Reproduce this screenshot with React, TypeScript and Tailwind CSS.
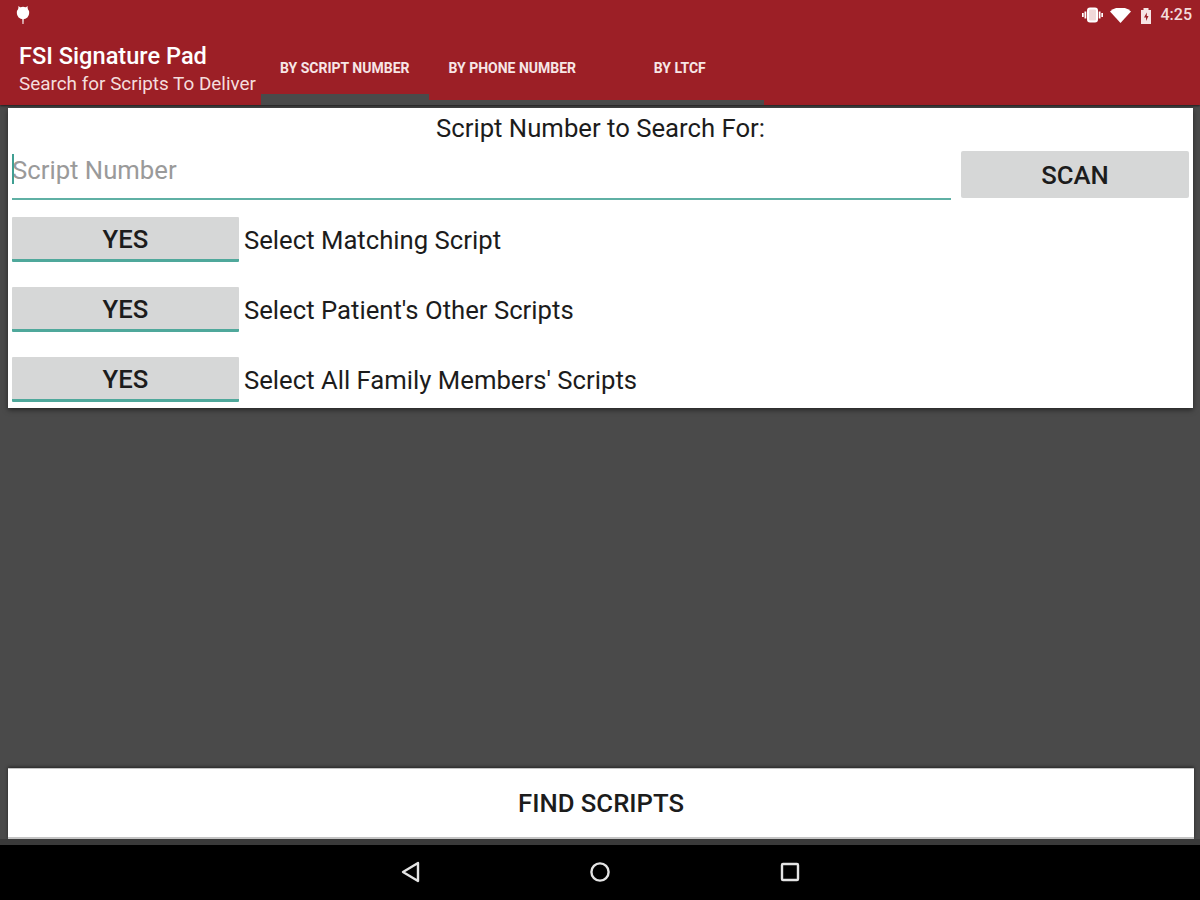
import React from 'react';

const tabs = ['BY SCRIPT NUMBER', 'BY PHONE NUMBER', 'BY LTCF'];
const options = ['Select Matching Script', "Select Patient's Other Scripts", "Select All Family Members' Scripts"];

function StatusBar() {
  return (
    <div className="h-[30px] flex items-center justify-between pl-[15px] pr-[8px]">
      <svg width="16" height="22" viewBox="0 0 16 22" fill="white">
        <circle cx="8" cy="9" r="6.2" />
        <path d="M3.4 2 L6 4 H10 L12.6 2 L12.6 6 H3.4 Z" />
        <path d="M7.3 14 H8.7 L8.5 20 H7.5 Z" />
      </svg>
      <div className="flex items-center">
        <svg width="21" height="16" viewBox="0 0 21 16" fill="none" className="mr-[7px]">
          <rect x="6" y="1.5" width="9" height="13" rx="2" fill="#f1d9d9" stroke="white" strokeWidth="2" />
          <path d="M3.4 4.5v7M0.8 6v4M17.6 4.5v7M20.2 6v4" stroke="white" strokeWidth="1.8" />
        </svg>
        <svg width="21" height="15" viewBox="0 0 21 15" fill="white" className="mr-[9px]">
          <path d="M10.5 15 L0 3.5 A15.5 15.5 0 0 1 21 3.5 Z" />
        </svg>
        <svg width="12" height="17" viewBox="0 0 12 17" className="mr-[9px]">
          <path d="M1 3h2.5V1h5v2H11v14H1Z" fill="#f6e4e4" />
          <path d="M6.8 5.5 4 10.5h2V14L8.5 9H6.8Z" fill="#9c1f26" />
        </svg>
        <span className="text-[16px] font-medium text-[#f3dcdc] leading-none">4:25</span>
      </div>
    </div>
  );
}

function NavBar() {
  return (
    <div className="h-[55px] bg-black flex items-center justify-center gap-[169px] pb-[1px]">
      <svg width="20" height="24" viewBox="0 0 20 24" fill="none">
        <path d="M18 3 L3 12 L18 21 Z" stroke="#e4e4e4" strokeWidth="2.4" strokeLinejoin="round" />
      </svg>
      <svg width="22" height="22" viewBox="0 0 22 22" fill="none">
        <circle cx="11" cy="11" r="8.6" stroke="#e4e4e4" strokeWidth="2.4" />
      </svg>
      <svg width="20" height="20" viewBox="0 0 20 20" fill="none">
        <rect x="2" y="2" width="16" height="16" rx="1" stroke="#e4e4e4" strokeWidth="2.4" />
      </svg>
    </div>
  );
}

export default function App() {
  return (
    <div className="w-[1200px] h-[900px] flex flex-col overflow-hidden bg-[#4a4a4a] font-['Roboto',sans-serif]">
      {/* Header */}
      <div className="h-[105px] shrink-0 bg-[#9c1f26] flex flex-col shadow-[0_1px_2px_rgba(0,0,0,0.6)]">
        <StatusBar />
        <div className="flex-1 flex">
          <div className="w-[261px] pl-[19px] pt-[12px] text-white">
            <div className="text-[23.6px] font-medium leading-[28px]">FSI Signature Pad</div>
            <div className="text-[18.9px] leading-[27px] text-[#f4dddd] whitespace-nowrap">Search for Scripts To Deliver</div>
          </div>
          <div className="flex self-stretch">
            {tabs.map((tab, i) => (
              <div key={tab} className="w-[167.5px] flex flex-col">
                <div className="flex-1 flex items-start justify-center pt-[30px]">
                  <span className="text-[14px] font-bold text-[#f7e6e6] leading-[16px] whitespace-nowrap">{tab}</span>
                </div>
                <div className={i === 0 ? 'h-[11px] bg-[#4a4a4a]' : 'h-[5px] bg-[#4a4a4a]'} />
              </div>
            ))}
          </div>
        </div>
      </div>

      {/* Search card */}
      <div className="mt-[3px] mx-[8px] w-[1185px] h-[300px] shrink-0 bg-white text-[#1c1c1c] shadow-[0_2px_5px_rgba(0,0,0,0.5)]">
        <div className="h-[40px] flex items-center justify-center text-[25.7px] pt-[1px] leading-none">Script Number to Search For:</div>
        <div className="flex pl-[4px] pr-[4px] h-[54px]">
          <div className="w-[939px] h-[52px] border-b-2 border-[#5fb0a4] flex items-center pb-[4px] relative">
            <div className="w-[2px] h-[30px] bg-[#3f9f92] absolute left-0 top-[6px]" />
            <span className="text-[25.7px] text-[#9a9a9a] leading-none">Script Number</span>
          </div>
          <div className="ml-[10px] mt-[3px] w-[228px] h-[47px] bg-[#d6d7d7] rounded-[2px] flex items-center justify-center text-[25.7px] font-medium pt-[2px] leading-none">SCAN</div>
        </div>
        <div className="flex flex-col gap-[25px] pl-[4px] pt-[15px]">
          {options.map((label) => (
            <div key={label} className="flex items-center h-[45px]">
              <div className="w-[227px] h-[45px] bg-[#d6d7d7] border-b-[3px] border-[#4fa89b] flex items-center justify-center text-[25.7px] font-medium rounded-[1px] pt-[4px] leading-none">YES</div>
              <span className="ml-[5px] pt-[2px] text-[25.7px] leading-none">{label}</span>
            </div>
          ))}
        </div>
      </div>

      {/* Find button */}
      <div className="mt-auto mx-[8px] w-[1186px] h-[71px] shrink-0 bg-white border-t border-[#c4c4c4] border-b-2 border-b-[#c4c4c4] flex items-center justify-center text-[25.7px] font-medium text-[#1c1c1c] pt-[2px] leading-none shadow-[0_-1px_3px_rgba(0,0,0,0.5)]">
        FIND SCRIPTS
      </div>
      <div className="h-[6px] shrink-0 bg-[#3a3a3a]" />
      <NavBar />
    </div>
  );
}
